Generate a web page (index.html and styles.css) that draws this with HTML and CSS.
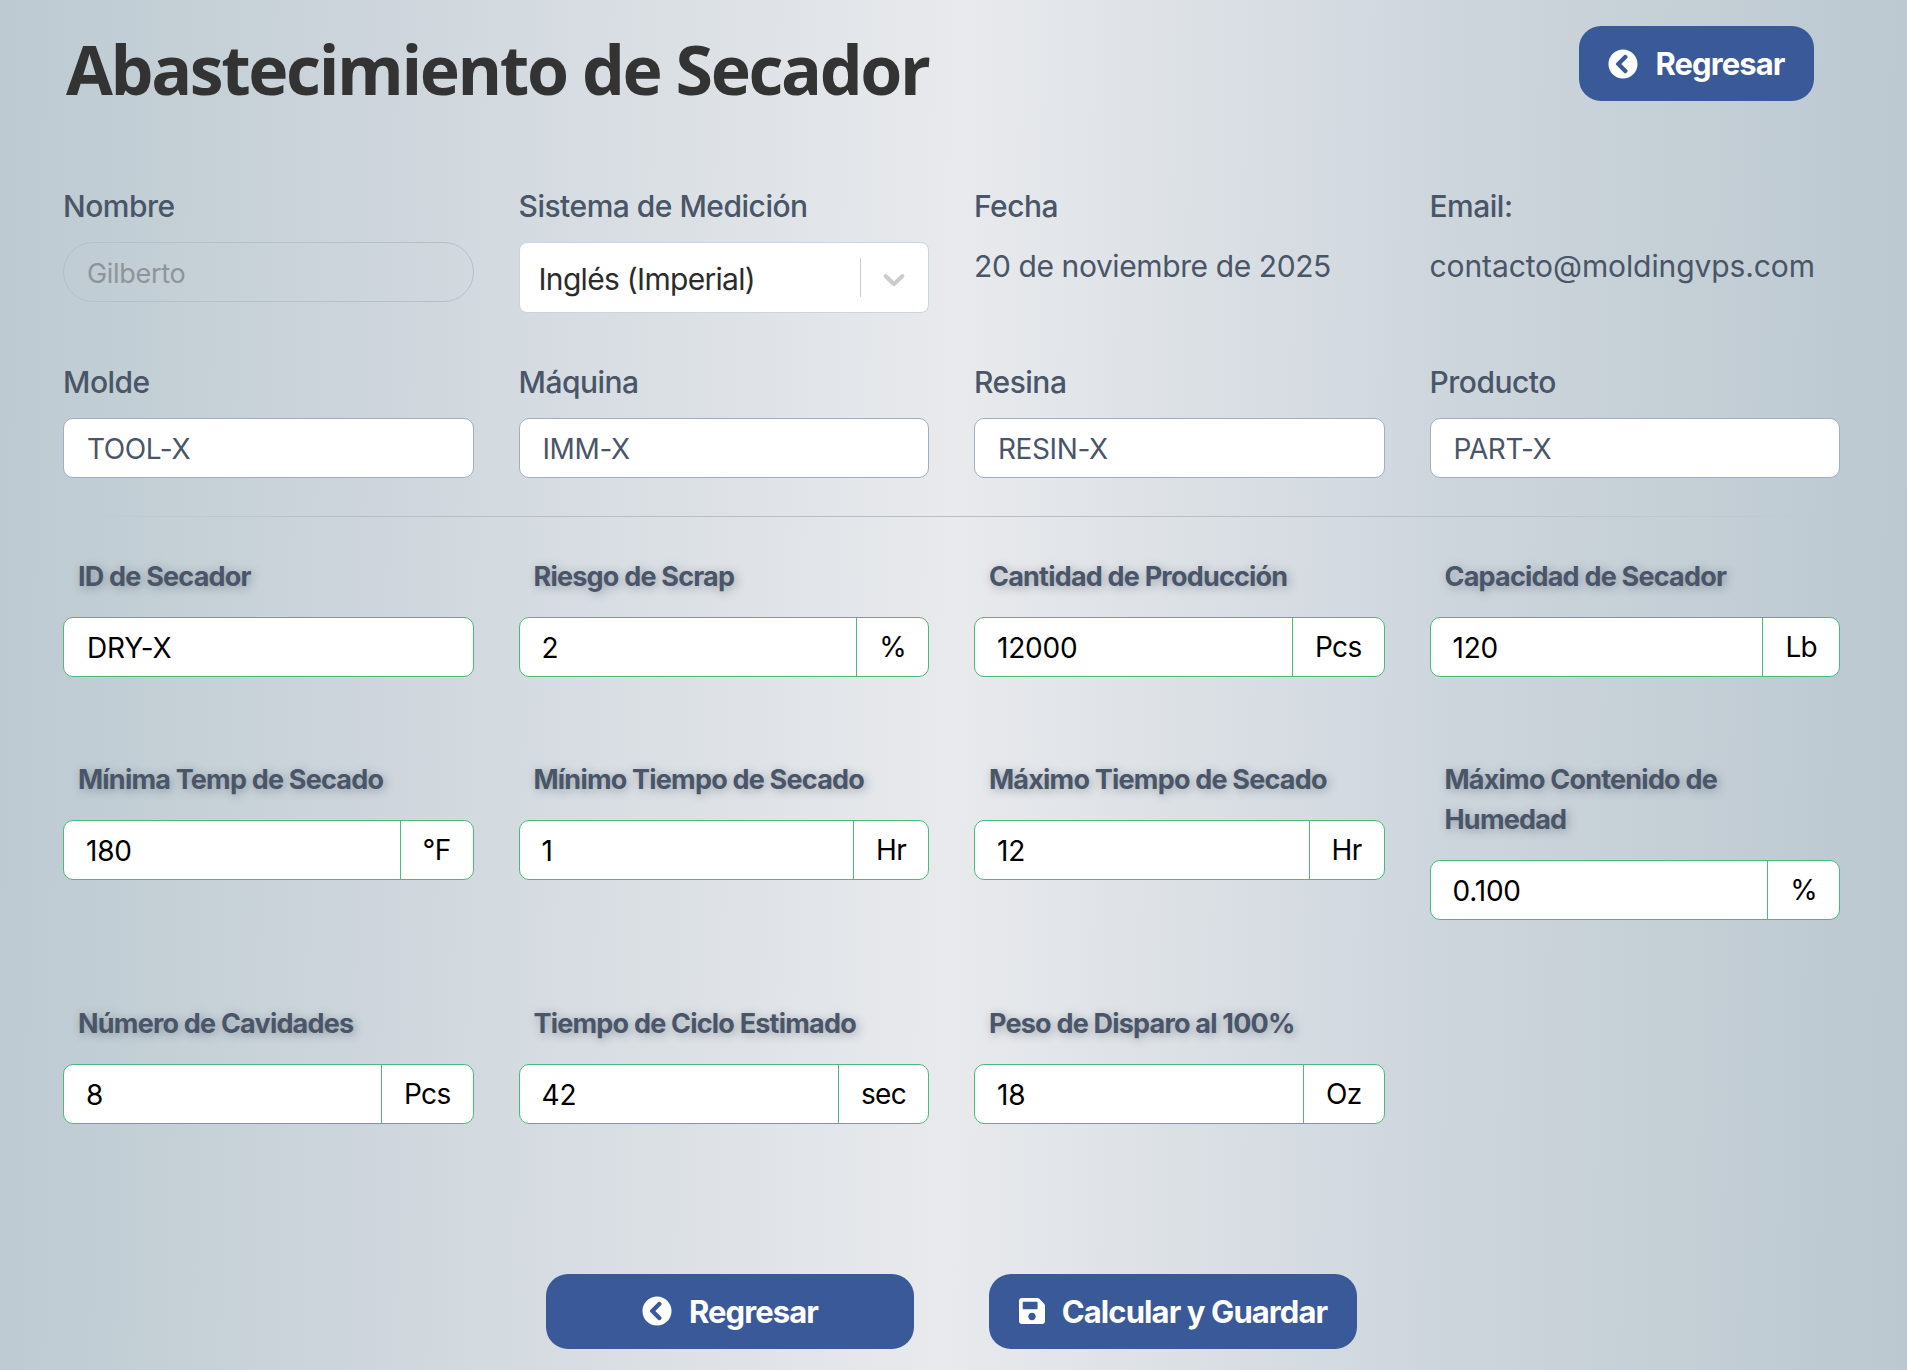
FILE: index.html
```html
<!DOCTYPE html>
<html lang="es">
<head>
<meta charset="utf-8">
<title>Abastecimiento de Secador</title>
<link rel="stylesheet" href="styles.css">
</head>
<body>
<main class="page">
  <header class="header">
    <h1 class="title">Abastecimiento de Secador</h1>
    <a class="btn btn-top"><svg class="icon" viewBox="0 0 512 512"><path fill="currentColor" d="M256 504C119 504 8 393 8 256S119 8 256 8s248 111 248 248-111 248-248 248zM142.1 273l135.5 135.5c9.4 9.4 24.6 9.4 33.9 0l17-17c9.4-9.4 9.4-24.6 0-33.9L226.9 256l101.6-101.6c9.4-9.4 9.4-24.6 0-33.9l-17-17c-9.4-9.4-24.6-9.4-33.9 0L142.1 239c-9.4 9.4-9.4 24.6 0 34z"/></svg><span>Regresar</span></a>
  </header>

  <section class="grid grid-info">
    <div class="cell"><div class="info-label">Nombre</div><div class="box box-disabled">Gilberto</div></div>
    <div class="cell"><div class="info-label">Sistema de Medición</div>
      <div class="select"><span class="select-value">Inglés (Imperial)</span><span class="select-sep"></span><svg class="select-chev" viewBox="0 0 20 20"><path fill="currentColor" d="M4.516 7.548c0.436-0.446 1.043-0.481 1.576 0l3.908 3.747 3.908-3.747c0.533-0.481 1.141-0.446 1.574 0 0.436 0.445 0.408 1.197 0 1.615-0.406 0.418-4.695 4.502-4.695 4.502-0.217 0.223-0.502 0.335-0.787 0.335s-0.57-0.112-0.789-0.335c0 0-4.287-4.084-4.695-4.502s-0.436-1.17 0-1.615z"/></svg></div></div>
    <div class="cell"><div class="info-label">Fecha</div><div class="info-text">20 de noviembre de 2025</div></div>
    <div class="cell"><div class="info-label">Email:</div><div class="info-text info-mail">contacto@moldingvps.com</div></div>
    <div class="cell"><div class="info-label">Molde</div><div class="box box-info">TOOL-X</div></div>
    <div class="cell"><div class="info-label">Máquina</div><div class="box box-info">IMM-X</div></div>
    <div class="cell"><div class="info-label">Resina</div><div class="box box-info">RESIN-X</div></div>
    <div class="cell"><div class="info-label">Producto</div><div class="box box-info">PART-X</div></div>
  </section>

  <hr class="divider">

  <section class="grid grid-form">
    <div class="fcell"><div class="f-label">ID de Secador</div><div class="box box-green">DRY-X</div></div>
    <div class="fcell"><div class="f-label">Riesgo de Scrap</div><div class="box box-green group"><span class="val">2</span><span class="addon">%</span></div></div>
    <div class="fcell"><div class="f-label">Cantidad de Producción</div><div class="box box-green group"><span class="val">12000</span><span class="addon">Pcs</span></div></div>
    <div class="fcell"><div class="f-label">Capacidad de Secador</div><div class="box box-green group"><span class="val">120</span><span class="addon">Lb</span></div></div>

    <div class="fcell"><div class="f-label">Mínima Temp de Secado</div><div class="box box-green group"><span class="val">180</span><span class="addon">°F</span></div></div>
    <div class="fcell"><div class="f-label">Mínimo Tiempo de Secado</div><div class="box box-green group"><span class="val">1</span><span class="addon">Hr</span></div></div>
    <div class="fcell"><div class="f-label">Máximo Tiempo de Secado</div><div class="box box-green group"><span class="val">12</span><span class="addon">Hr</span></div></div>
    <div class="fcell"><div class="f-label">Máximo Contenido de Humedad</div><div class="box box-green group"><span class="val">0.100</span><span class="addon">%</span></div></div>

    <div class="fcell"><div class="f-label">Número de Cavidades</div><div class="box box-green group"><span class="val">8</span><span class="addon">Pcs</span></div></div>
    <div class="fcell"><div class="f-label">Tiempo de Ciclo Estimado</div><div class="box box-green group"><span class="val">42</span><span class="addon">sec</span></div></div>
    <div class="fcell"><div class="f-label">Peso de Disparo al 100%</div><div class="box box-green group"><span class="val">18</span><span class="addon">Oz</span></div></div>
  </section>

  <footer class="actions">
    <a class="btn btn-bottom"><svg class="icon" viewBox="0 0 512 512"><path fill="currentColor" d="M256 504C119 504 8 393 8 256S119 8 256 8s248 111 248 248-111 248-248 248zM142.1 273l135.5 135.5c9.4 9.4 24.6 9.4 33.9 0l17-17c9.4-9.4 9.4-24.6 0-33.9L226.9 256l101.6-101.6c9.4-9.4 9.4-24.6 0-33.9l-17-17c-9.4-9.4-24.6-9.4-33.9 0L142.1 239c-9.4 9.4-9.4 24.6 0 34z"/></svg><span>Regresar</span></a>
    <a class="btn btn-bottom"><svg class="icon icon-save" viewBox="0 0 448 512"><path fill="currentColor" d="M433.941 129.941l-83.882-83.882A48 48 0 0 0 316.118 32H48C21.49 32 0 53.49 0 80v352c0 26.51 21.49 48 48 48h352c26.51 0 48-21.49 48-48V163.882a48 48 0 0 0-14.059-33.941zM224 416c-35.346 0-64-28.654-64-64 0-35.346 28.654-64 64-64s64 28.654 64 64c0 35.346-28.654 64-64 64zm96-304.52V212c0 6.627-5.373 12-12 12H76c-6.627 0-12-5.373-12-12V108c0-6.627 5.373-12 12-12h228.52c3.183 0 6.235 1.264 8.485 3.515l3.48 3.48A11.996 11.996 0 0 1 320 111.48z"/></svg><span>Calcular y Guardar</span></a>
  </footer>
</main>
</body>
</html>
```
FILE: styles.css
```css
* { box-sizing: border-box; }
html, body { margin: 0; padding: 0; }
body {
  height: 1370px;
  overflow: hidden;
  font-family: "Inter", "Noto Sans", sans-serif;
  background: linear-gradient(91deg, #bccad1 0%, #d2d9df 25%, #e8eaed 50%, #ced6dd 75%, #bbc8d0 100%);
}
.page { padding: 26px 67px 0 63px; }
.header { display: flex; justify-content: space-between; align-items: flex-start; height: 75px; }
.title {
  margin: 11px 0 0 3px;
  font-family: "Open Sans", sans-serif;
  font-size: 68px;
  line-height: 64px;
  font-weight: 700;
  letter-spacing: -2.4px;
  color: #333;
}
.btn {
  display: flex;
  align-items: center;
  justify-content: center;
  gap: 17px;
  height: 75px;
  border-radius: 22px;
  background: #3a5998;
  color: #fff;
  font-size: 31px;
  font-weight: 700;
  letter-spacing: -0.9px;
}
.btn-top { width: 235px; margin-right: 26px; }
.btn-bottom { width: 368px; }
.icon { width: 30px; height: 30px; flex: none; }
.icon-save { width: 26px; }
.grid { display: grid; grid-template-columns: repeat(4, 1fr); column-gap: 45px; }
.grid-info { margin-top: 86px; }
.cell { height: 175.5px; display: flex; flex-direction: column; align-items: stretch; }
.cell:nth-child(n+5) { height: 130px; }
.info-label {
  height: 40px;
  margin-bottom: 15px;
  font-size: 30px;
  line-height: 38px;
  font-weight: 550;
  letter-spacing: -0.5px;
  color: #4a5568;
}
.box {
  height: 60px;
  display: flex;
  align-items: center;
  padding-left: 23px;
  padding-top: 2px;
  border-radius: 10px;
  border: 1px solid #a0aec0;
  background: #fff;
  font-size: 28px;
}
.box-disabled {
  border-radius: 30px;
  border-color: #b4c0cc;
  background: transparent;
  color: #8f9499;
  font-size: 27px;
  letter-spacing: -0.3px;
}
.box-info { color: #4a5568; letter-spacing: -0.4px; }
.box-green { border-color: #48bb78; color: #000; letter-spacing: -0.2px; }
.group { padding-left: 0; padding-top: 0; overflow: hidden; }
.val { flex: 1; padding-left: 22px; padding-top: 3px; }
.addon {
  height: 100%;
  display: flex;
  align-items: center;
  padding: 1px 22px 0;
  border-left: 1px solid #48bb78;
  letter-spacing: -0.7px;
}
.select {
  height: 71px;
  display: flex;
  align-items: center;
  border: 1px solid #cbd5e0;
  border-radius: 8px;
  background: #fff;
  color: #2b2b2b;
  font-size: 30px;
  letter-spacing: -0.7px;
}
.select-value { flex: 1; padding-left: 19px; padding-top: 2px; }
.select-sep { width: 1px; height: 39px; background: #ccc; }
.select-chev { width: 36px; height: 36px; margin: 2px 16px 0 15px; color: #ccc; }
.info-text {
  margin-top: 4px;
  font-size: 30px;
  line-height: 40px;
  letter-spacing: -0.4px;
  font-weight: 400;
  color: #4a5568;
}
.info-mail { letter-spacing: -0.1px; }
.divider {
  height: 1px;
  margin: 23px 0 40px;
  border: 0;
  background: linear-gradient(90deg, transparent 0, #b9bec4 15%, #b9bec4 80%, transparent 100%);
}
.fcell { margin-bottom: 83px; display: flex; flex-direction: column; }
.fcell:nth-child(n+5) { margin-bottom: 84px; }
.f-label {
  margin-bottom: 20px;
  padding: 0 15px;
  font-size: 27px;
  line-height: 40px;
  font-weight: 700;
  letter-spacing: -0.8px;
  color: #4a5568;
  text-shadow: 2px 2px 10px rgba(74, 85, 104, 0.45);
}
.actions { display: flex; justify-content: center; gap: 75px; margin-top: 66px; }
```
